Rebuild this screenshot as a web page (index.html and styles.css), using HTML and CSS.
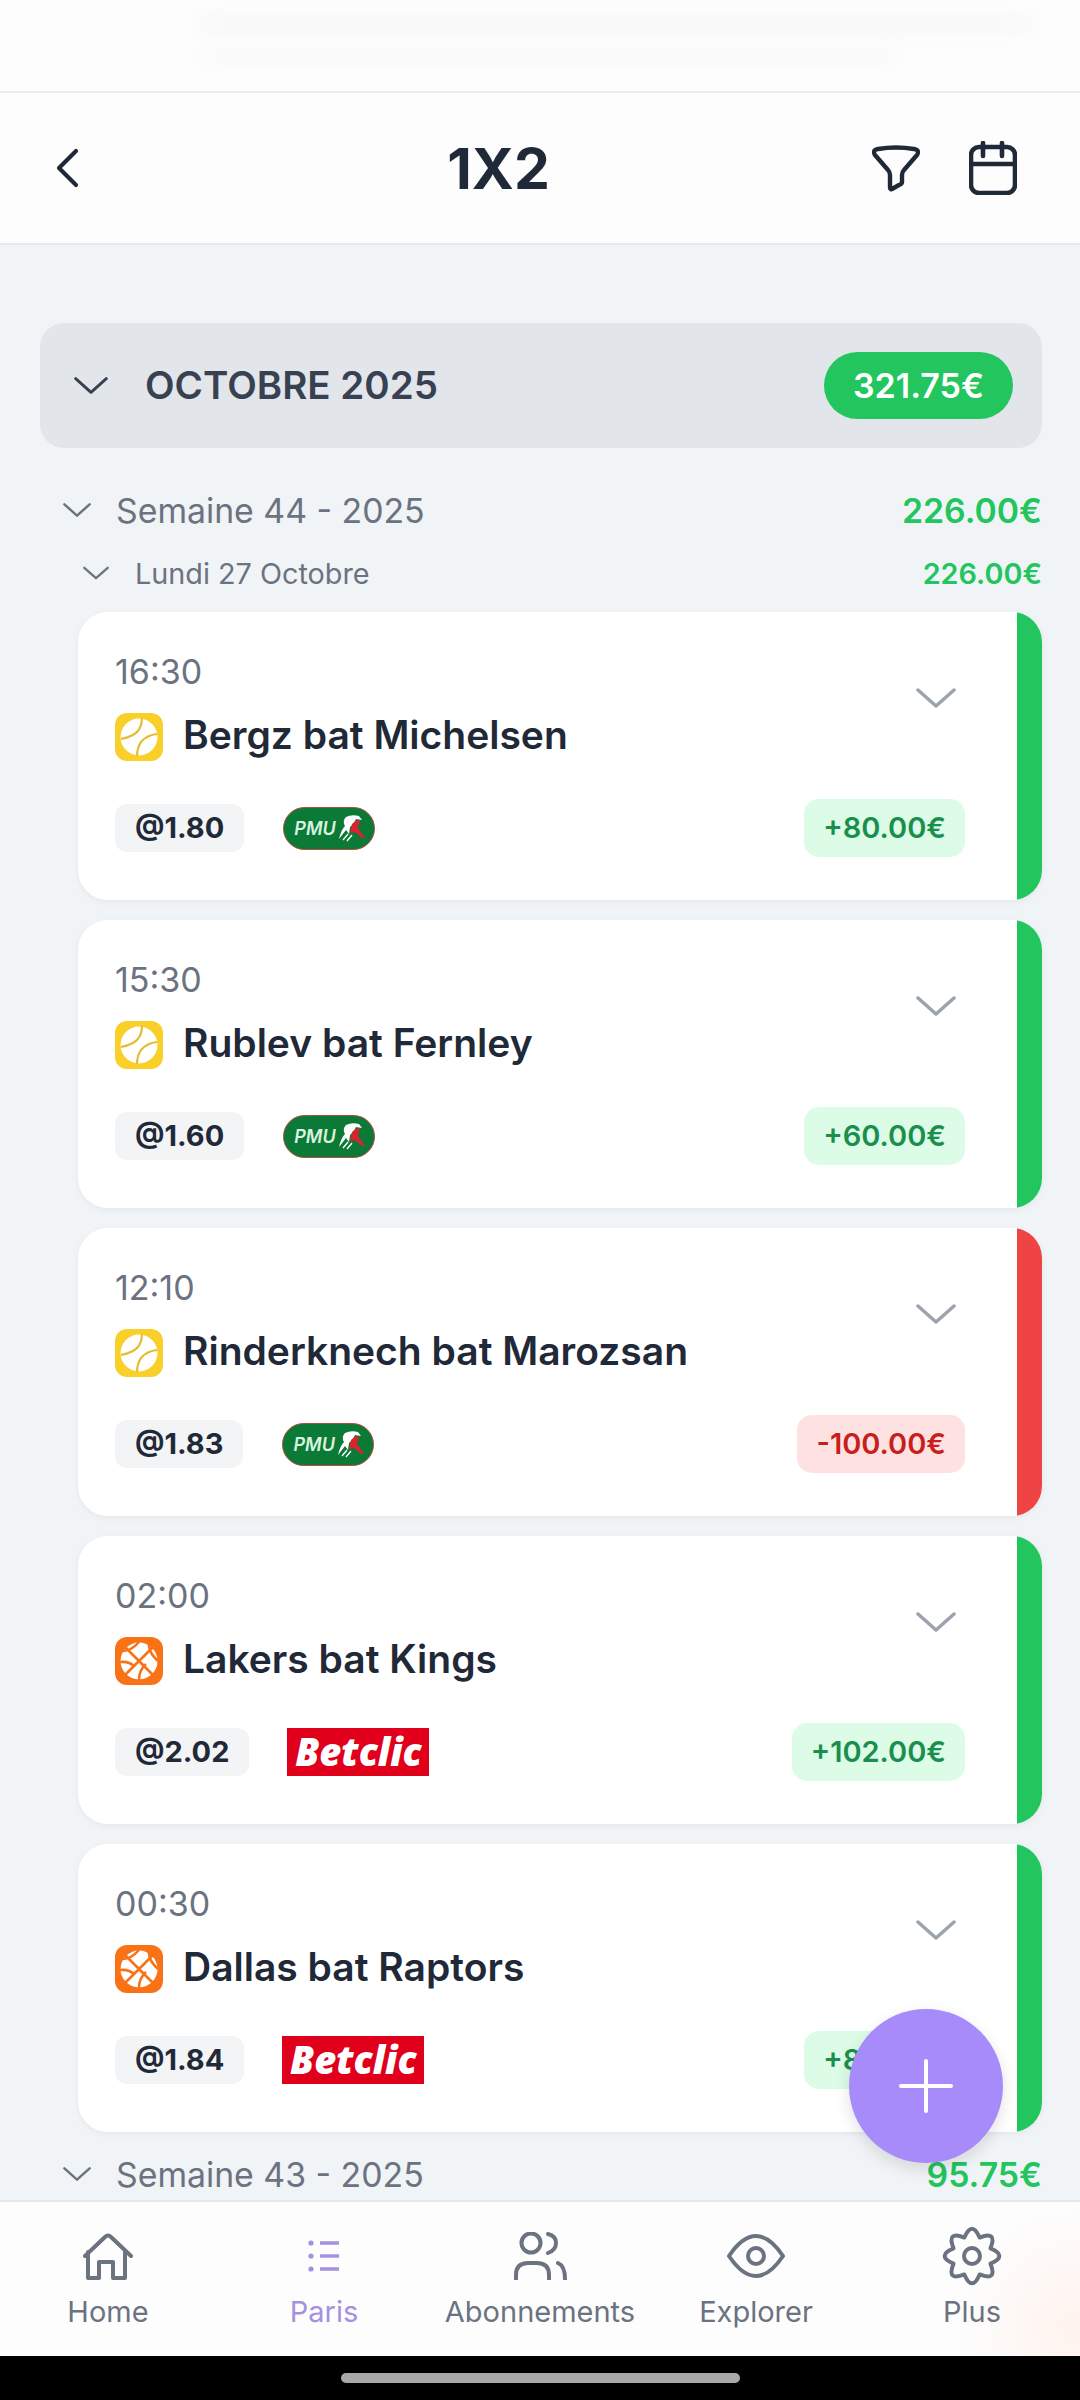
FILE: index.html
```html
<!DOCTYPE html>
<html lang="fr">
<head>
  <meta charset="UTF-8" />
  <meta name="viewport" content="width=device-width, initial-scale=1.0"/>
  <title>1X2</title>
  <link rel="stylesheet" href="styles.css">
</head>
<body>
  <svg class="sprites" width="0" height="0">
    <symbol id="chev" viewBox="0 0 40 20"><path d="M2 2 L20 18 L38 2" fill="none" stroke="currentColor" stroke-width="3.5" stroke-linecap="round" stroke-linejoin="round"/></symbol>
    <symbol id="tennis" viewBox="0 0 48 48">
      <rect width="48" height="48" rx="12" fill="#f9cf2a"/>
      <circle cx="24" cy="24" r="18.5" fill="#fff"/>
      <path d="M27 5 Q27 17 18 22 Q12 25 6 26 M42 21 Q32 22 26 29 Q22 35 22 43" fill="none" stroke="#e4bc2e" stroke-width="2.2"/>
    </symbol>
    <symbol id="basket" viewBox="0 0 48 48">
      <rect width="48" height="48" rx="12" fill="#f97316"/>
      <circle cx="24" cy="24" r="18.5" fill="#fff"/>
      <path d="M10 10 L38 38 M38 10 L10 38 M24 5 Q16 14 8 14 M43 24 Q34 16 34 8 M24 43 Q24 33 31 27 M5 25 Q15 24 20 30" fill="none" stroke="#f97316" stroke-width="2.6"/>
    </symbol>
    <symbol id="horse" viewBox="0 0 30 28">
      <path d="M2 25 Q4 16 8 12 Q5 7 9 3 Q15 0 22 2 L25 6 L19 5 Q17 10 13 13 L12 20 L9 16 Z" fill="#fff"/>
      <path d="M15 10 Q19 6 23 6 L21 14 L28 24 L25 24 L18 18 L13 19 Z" fill="#d9232e"/>
      <path d="M6 26 L11 20 M10 27 L15 21" stroke="#fff" stroke-width="1.4"/>
    </symbol>
  </svg>

  <div class="page">
    <div class="status">
      <span class="smear smear-a"></span>
      <span class="smear smear-b"></span>
    </div>

    <header class="topbar">
      <a class="back">
        <svg width="24" height="40" viewBox="0 0 24 40"><path d="M21 3 L4 20 L21 37" fill="none" stroke="#1f2937" stroke-width="4.2" stroke-linecap="round" stroke-linejoin="round"/></svg>
      </a>
      <h1>1X2</h1>
      <div class="actions">
        <svg width="48" height="48" viewBox="0 0 48 48"><path d="M3 11 Q0 6 6 5 Q24 2 42 5 Q48 6 45 11 L32 26 Q30 28 30 31 V38 Q30 40 27 41 L20 45 Q18 46 18 43 V31 Q18 28 16 26 Z" fill="none" stroke="#1f2937" stroke-width="4.4" stroke-linejoin="round"/></svg>
        <svg width="48" height="54" viewBox="0 0 48 54"><rect x="2" y="6" width="44" height="46" rx="8" fill="none" stroke="#1f2937" stroke-width="4.6"/><path d="M2 23 H46 M14 2 V15 M33 2 V15" fill="none" stroke="#1f2937" stroke-width="4.6" stroke-linecap="round"/></svg>
      </div>
    </header>

    <main class="content">
      <div class="month">
        <svg class="chev-month"><use href="#chev"/></svg>
        <span class="month-name">OCTOBRE 2025</span>
        <span class="month-total">321.75€</span>
      </div>

      <div class="week">
        <svg class="chev-week"><use href="#chev"/></svg>
        <span>Semaine 44 - 2025</span>
        <b>226.00€</b>
      </div>
      <div class="day">
        <svg class="chev-day"><use href="#chev"/></svg>
        <span>Lundi 27 Octobre</span>
        <b>226.00€</b>
      </div>

      <div class="bets">
        <div class="bet">
          <div class="bet-body">
            <div class="bet-top">
              <div>
                <div class="time">16:30</div>
                <div class="match"><svg class="sport"><use href="#tennis"/></svg><span>Bergz bat Michelsen</span></div>
              </div>
              <svg class="chev-bet"><use href="#chev"/></svg>
            </div>
            <div class="bet-foot">
              <span class="odds">@1.80</span>
              <div class="logo-pmu"><span>PMU</span><svg class="horse"><use href="#horse"/></svg></div>
              <span class="profit">+80.00€</span>
            </div>
          </div>
          <div class="stripe"></div>
        </div>

        <div class="bet">
          <div class="bet-body">
            <div class="bet-top">
              <div>
                <div class="time">15:30</div>
                <div class="match"><svg class="sport"><use href="#tennis"/></svg><span>Rublev bat Fernley</span></div>
              </div>
              <svg class="chev-bet"><use href="#chev"/></svg>
            </div>
            <div class="bet-foot">
              <span class="odds">@1.60</span>
              <div class="logo-pmu"><span>PMU</span><svg class="horse"><use href="#horse"/></svg></div>
              <span class="profit">+60.00€</span>
            </div>
          </div>
          <div class="stripe"></div>
        </div>

        <div class="bet">
          <div class="bet-body">
            <div class="bet-top">
              <div>
                <div class="time">12:10</div>
                <div class="match"><svg class="sport"><use href="#tennis"/></svg><span>Rinderknech bat Marozsan</span></div>
              </div>
              <svg class="chev-bet"><use href="#chev"/></svg>
            </div>
            <div class="bet-foot">
              <span class="odds">@1.83</span>
              <div class="logo-pmu"><span>PMU</span><svg class="horse"><use href="#horse"/></svg></div>
              <span class="profit loss">-100.00€</span>
            </div>
          </div>
          <div class="stripe stripe-loss"></div>
        </div>

        <div class="bet">
          <div class="bet-body">
            <div class="bet-top">
              <div>
                <div class="time">02:00</div>
                <div class="match"><svg class="sport"><use href="#basket"/></svg><span>Lakers bat Kings</span></div>
              </div>
              <svg class="chev-bet"><use href="#chev"/></svg>
            </div>
            <div class="bet-foot">
              <span class="odds">@2.02</span>
              <div class="logo-betclic">Betclic</div>
              <span class="profit">+102.00€</span>
            </div>
          </div>
          <div class="stripe"></div>
        </div>

        <div class="bet">
          <div class="bet-body">
            <div class="bet-top">
              <div>
                <div class="time">00:30</div>
                <div class="match"><svg class="sport"><use href="#basket"/></svg><span>Dallas bat Raptors</span></div>
              </div>
              <svg class="chev-bet"><use href="#chev"/></svg>
            </div>
            <div class="bet-foot">
              <span class="odds">@1.84</span>
              <div class="logo-betclic">Betclic</div>
              <span class="profit">+84.00€</span>
            </div>
          </div>
          <div class="stripe"></div>
        </div>
      </div>

      <div class="week week-next">
        <svg class="chev-week"><use href="#chev"/></svg>
        <span>Semaine 43 - 2025</span>
        <b>95.75€</b>
      </div>
    </main>

    <nav class="tabs">
      <a class="tab">
        <span class="tab-icon">
          <svg width="51" height="48" viewBox="0 0 51 48"><path d="M2 24 L22 5 Q25 2 28 5 L48 24 M5 20 V46 H16 V30 H30 V46 H42 V20" fill="none" stroke="currentColor" stroke-width="4" stroke-linecap="round" stroke-linejoin="round"/></svg>
        </span>
        Home
      </a>
      <a class="tab tab-active">
        <span class="tab-icon">
          <svg width="34" height="32" viewBox="0 0 34 32"><path d="M13 3 H32 M13 16 H32 M13 29 H32" fill="none" stroke="currentColor" stroke-width="3.4"/><circle cx="4" cy="3" r="2.6" fill="currentColor"/><circle cx="4" cy="16" r="2.6" fill="currentColor"/><circle cx="4" cy="29" r="2.6" fill="currentColor"/></svg>
        </span>
        Paris
      </a>
      <a class="tab">
        <span class="tab-icon">
          <svg width="54" height="48" viewBox="0 0 54 48"><circle cx="18" cy="11" r="9.5" fill="none" stroke="currentColor" stroke-width="4"/><path d="M35 2 Q43 4 43 11 T35 21 M3 47 V43 Q3 31 15 31 H24 Q36 31 36 43 V47 M45 31 Q52 34 52 47" fill="none" stroke="currentColor" stroke-width="4" stroke-linecap="round"/></svg>
        </span>
        Abonnements
      </a>
      <a class="tab">
        <span class="tab-icon">
          <svg width="58" height="44" viewBox="0 0 58 44"><path d="M2 22 C12 7 20 2 29 2 S46 7 56 22 C46 37 38 42 29 42 S12 37 2 22 Z" fill="none" stroke="currentColor" stroke-width="4" stroke-linejoin="round"/><circle cx="29" cy="22" r="8" fill="none" stroke="currentColor" stroke-width="4"/></svg>
        </span>
        Explorer
      </a>
      <a class="tab">
        <span class="tab-icon">
          <svg width="60" height="60" viewBox="0 0 48 48"><path d="M17.88 9.22 Q24 -5 30.12 9.22 Q44.5 3.5 38.78 17.88 Q53 24 38.78 30.12 Q44.5 44.5 30.12 38.78 Q24 53 17.88 38.78 Q3.5 44.5 9.22 30.12 Q-5 24 9.22 17.88 Q3.5 3.5 17.88 9.22 Z" fill="none" stroke="currentColor" stroke-width="3.2" stroke-linejoin="round"/><circle cx="24" cy="24" r="6.4" fill="none" stroke="currentColor" stroke-width="3.2"/></svg>
        </span>
        Plus
      </a>
    </nav>

    <div class="home-bar"><span></span></div>

    <button class="fab">
      <svg width="54" height="54" viewBox="0 0 54 54"><path d="M27 2 V52 M2 27 H52" stroke="#fff" stroke-width="4" stroke-linecap="round"/></svg>
    </button>
  </div>
</body>
</html>
```

FILE: styles.css
```css
* {
  box-sizing: border-box;
}

body {
  margin: 0;
  font-family: Inter, 'Noto Sans', sans-serif;
  background: #f1f4f7;
}

.sprites {
  position: absolute;
}

.page {
  position: relative;
  width: 1080px;
  height: 2400px;
  display: flex;
  flex-direction: column;
  overflow: hidden;
}

/* status bar, blurred behind the app */
.status {
  height: 93px;
  padding: 18px 0 0 200px;
  background: #fdfdfd;
  border-bottom: 2px solid #ececee;
  overflow: hidden;
}

.smear {
  display: block;
  height: 12px;
  border-radius: 6px;
  background: #f6f6f7;
  filter: blur(9px);
}

.smear-a {
  width: 830px;
}

.smear-b {
  width: 700px;
  margin-top: 20px;
  opacity: 0.6;
}

.topbar {
  height: 152px;
  display: flex;
  align-items: center;
  padding: 0 63px 0 55px;
  background: #fdfdfd;
  border-bottom: 2px solid #e6e8ec;
}

.back {
  width: 70px;
  display: flex;
}

.topbar h1 {
  flex: 1;
  margin: 0;
  text-align: center;
  font-size: 57px;
  font-weight: 700;
  color: #1f2937;
}

.actions {
  display: flex;
  align-items: center;
  gap: 49px;
}

.content {
  flex: 1;
  min-height: 0;
  padding: 78px 38px 0 40px;
  overflow: hidden;
}

.month {
  height: 125px;
  display: flex;
  align-items: center;
  padding: 0 29px 0 34px;
  background: #e2e5ea;
  border-radius: 24px;
}

.chev-month {
  width: 34px;
  height: 19px;
  color: #374151;
}

.month-name {
  flex: 1;
  margin: 0 0 2px 37px;
  font-size: 38.5px;
  font-weight: 600;
  color: #374151;
}

.month-total {
  height: 67px;
  line-height: 67px;
  padding: 0 29px;
  border-radius: 34px;
  background: #22c55e;
  color: #fff;
  font-size: 34px;
  font-weight: 600;
}

.week,
.day {
  display: flex;
  align-items: center;
  color: #6b7280;
}

.week span,
.day span {
  flex: 1;
}

.week b,
.day b {
  color: #22c55e;
  font-weight: 600;
}

.week {
  height: 44px;
  margin-top: 40px;
  padding-left: 23px;
  font-size: 33.8px;
}

.week-next {
  margin-top: 20px;
}

.chev-week {
  width: 28px;
  height: 14px;
  margin-right: 25px;
}

.day {
  height: 36px;
  margin-top: 23px;
  padding-left: 43px;
  font-size: 28.8px;
}

.chev-day {
  width: 26px;
  height: 14px;
  margin-right: 26px;
}

.bets {
  display: flex;
  flex-direction: column;
  gap: 20px;
  margin: 21px 0 0 38px;
}

.bet {
  height: 288px;
  display: flex;
  background: #fff;
  border-radius: 30px;
  box-shadow: 0 2px 6px rgba(0,0,0,0.05);
  overflow: hidden;
}

.bet-body {
  flex: 1;
  padding: 40px 52px 0 37px;
}

.stripe {
  width: 25px;
  background: #22c55e;
}

.stripe-loss {
  background: #ef4444;
}

.bet-top {
  display: flex;
  justify-content: space-between;
}

.time {
  height: 40px;
  line-height: 40px;
  font-size: 34px;
  color: #6b7280;
}

.match {
  display: flex;
  align-items: center;
  height: 48px;
  margin-top: 21px;
  font-size: 39px;
  font-weight: 600;
  color: #1f2937;
}

.match span {
  margin-bottom: 5px;
}

.sport {
  width: 48px;
  height: 48px;
  margin-right: 20px;
}

.chev-bet {
  width: 40px;
  height: 20px;
  margin: 36px 9px 0 0;
  color: #9ca3af;
}

.bet-foot {
  display: flex;
  align-items: center;
  height: 58px;
  margin-top: 38px;
}

.odds {
  height: 48px;
  line-height: 48px;
  padding: 0 20px;
  border-radius: 12px;
  background: #f3f4f6;
  font-size: 29px;
  font-weight: 700;
  color: #1f2937;
}

.logo-pmu {
  width: 92px;
  height: 43px;
  margin-left: 39px;
  display: flex;
  align-items: center;
  padding-left: 10px;
  border: 1px solid #b5493f;
  border-radius: 22px;
  background: #0b7a37;
  color: #d8f3df;
  font-size: 18px;
  font-weight: 600;
  font-style: italic;
}

.horse {
  width: 30px;
  height: 28px;
  margin-left: 1px;
}

.logo-betclic {
  width: 142px;
  height: 48px;
  line-height: 46px;
  margin-left: 38px;
  text-align: center;
  background: #e0001b;
  color: #fff;
  font-family: 'Open Sans', sans-serif;
  font-size: 38px;
  font-weight: 800;
  font-style: italic;
}

.profit {
  height: 58px;
  line-height: 58px;
  margin-left: auto;
  padding: 0 19px;
  border-radius: 15px;
  background: #dcfce7;
  color: #1a8f4d;
  font-size: 29px;
  font-weight: 600;
}

.profit.loss {
  background: #fee2e2;
  color: #c81e1e;
}

.tabs {
  height: 156px;
  display: flex;
  padding-top: 24px;
  background: radial-gradient(circle at 1075px 125px, #fff3ee 0, #fdfdfd 120px);
  border-top: 2px solid #e6e8ec;
}

.tab {
  flex: 1;
  display: flex;
  flex-direction: column;
  align-items: center;
  font-size: 29px;
  line-height: 34px;
  color: #6b7280;
}

.tab-active {
  color: #a491e0;
}

.tab-icon {
  height: 60px;
  margin-bottom: 9px;
  display: flex;
  align-items: center;
}

.home-bar {
  height: 44px;
  display: flex;
  align-items: center;
  justify-content: center;
  background: #000;
}

.home-bar span {
  width: 399px;
  height: 10px;
  border-radius: 5px;
  background: #a8a8a8;
}

.fab {
  position: absolute;
  left: 849px;
  top: 2009px;
  width: 154px;
  height: 154px;
  display: flex;
  align-items: center;
  justify-content: center;
  padding: 0;
  border: none;
  border-radius: 50%;
  background: #a78bfa;
  box-shadow: 0 6px 16px rgba(0,0,0,0.12);
}
```
